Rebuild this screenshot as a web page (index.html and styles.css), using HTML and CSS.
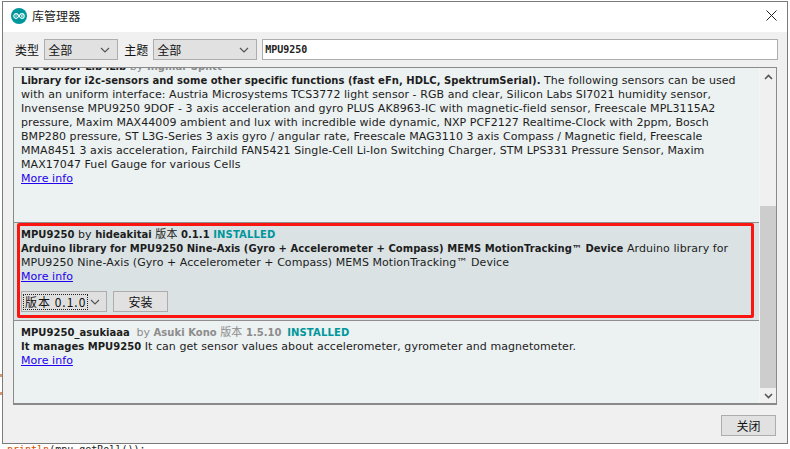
FILE: index.html
```html
<!DOCTYPE html>
<html lang="zh-CN">
<head>
  <meta charset="UTF-8" />
  <title>库管理器</title>
  <link rel="stylesheet" href="styles.css">
</head>
<body>
  <div class="stray stray-a"></div>
  <div class="stray stray-b"></div>
  <div class="window">
    <div class="titlebar">
      <svg class="logo" width="16" height="16" viewBox="0 0 16 16">
        <circle cx="8" cy="8" r="8" fill="#00979c"/>
        <path d="M5.2 5.6a2.4 2.4 0 1 0 0 4.8c1.3 0 2-1.2 2.8-2.4.8-1.2 1.5-2.4 2.8-2.4a2.4 2.4 0 1 1 0 4.8c-1.3 0-2-1.2-2.8-2.4-.8-1.2-1.5-2.4-2.8-2.4z" fill="none" stroke="#fff" stroke-width="1.1"/>
        <path d="M4.2 8h2M9.9 8h1.9M10.85 7.05v1.9" fill="none" stroke="#fff" stroke-width=".8"/>
      </svg>
      <span class="title">库管理器</span>
      <svg class="close-x" width="11" height="11" viewBox="0 0 11 11">
        <path d="M.5.5l10 10M10.5.5l-10 10" stroke="#222" stroke-width="1" fill="none"/>
      </svg>
    </div>

    <div class="content">
      <div class="filters">
        <label>类型</label>
        <div class="dropdown type-drop">全部
          <svg width="10" height="6" viewBox="0 0 10 6"><path d="M1 1l4 4 4-4" fill="none" stroke="#555" stroke-width="1.2"/></svg>
        </div>
        <label>主题</label>
        <div class="dropdown topic-drop">全部
          <svg width="10" height="6" viewBox="0 0 10 6"><path d="M1 1l4 4 4-4" fill="none" stroke="#555" stroke-width="1.2"/></svg>
        </div>
        <input class="search" type="text" value="MPU9250">
      </div>

      <div class="list">
        <div class="rows">
          <div class="row row-first">
            <div><b>I2C Sensor Lib iLib</b> <span class="muted">by <b>Ingmar Splitt</b></span></div>
            <div><b>Library for i2c-sensors and some other specific functions (fast eFn, HDLC, SpektrumSerial).</b> The following sensors can be used</div>
            <div>with an uniform interface: Austria Microsystems TCS3772 light sensor - RGB and clear, Silicon Labs SI7021 humidity sensor,</div>
            <div>Invensense MPU9250 9DOF - 3 axis acceleration and gyro PLUS AK8963-IC with magnetic-field sensor, Freescale MPL3115A2</div>
            <div>pressure, Maxim MAX44009 ambient and lux with incredible wide dynamic, NXP PCF2127 Realtime-Clock with 2ppm, Bosch</div>
            <div>BMP280 pressure, ST L3G-Series 3 axis gyro / angular rate, Freescale MAG3110 3 axis Compass / Magnetic field, Freescale</div>
            <div>MMA8451 3 axis acceleration, Fairchild FAN5421 Single-Cell Li-Ion Switching Charger, STM LPS331 Pressure Sensor, Maxim</div>
            <div>MAX17047 Fuel Gauge for various Cells</div>
            <a href="#">More info</a>
          </div>

          <div class="row row-selected">
            <div><b>MPU9250</b> by <b>hideakitai</b> 版本 <b>0.1.1</b> <b class="installed">INSTALLED</b></div>
            <div><b>Arduino library for MPU9250 Nine-Axis (Gyro + Accelerometer + Compass) MEMS MotionTracking™ Device</b> Arduino library for</div>
            <div>MPU9250 Nine-Axis (Gyro + Accelerometer + Compass) MEMS MotionTracking™ Device</div>
            <a href="#">More info</a>
            <div class="actions">
              <div class="dropdown version-drop"><span class="focus">版本 0.1.0</span>
                <svg width="10" height="6" viewBox="0 0 10 6"><path d="M1 1l4 4 4-4" fill="none" stroke="#555" stroke-width="1.2"/></svg>
              </div>
              <button class="btn install-btn">安装</button>
            </div>
            <div class="highlight"></div>
          </div>

          <div class="row row-last">
            <div><b>MPU9250_asukiaaa</b> <span class="muted">by <b>Asuki Kono</b> 版本 <b>1.5.10</b></span> <b class="installed">INSTALLED</b></div>
            <div><b>It manages MPU9250</b> It can get sensor values about accelerometer, gyrometer and magnetometer.</div>
            <a href="#">More info</a>
          </div>
        </div>

        <div class="scrollbar">
          <div class="arrow">
            <svg width="9" height="6" viewBox="0 0 9 6"><path d="M1 5l3.5-3.5L8 5" fill="none" stroke="#555" stroke-width="1.6"/></svg>
          </div>
          <div class="track"><div class="thumb"></div></div>
          <div class="arrow arrow-down">
            <svg width="9" height="6" viewBox="0 0 9 6"><path d="M1 1l3.5 3.5L8 1" fill="none" stroke="#555" stroke-width="1.6"/></svg>
          </div>
        </div>
      </div>

      <div class="footer">
        <button class="btn close-btn">关闭</button>
      </div>
    </div>
  </div>
  <div class="code-behind"><span class="kw">println</span>(mpu.getRoll());</div>
</body>
</html>
```
FILE: styles.css
```css
* {
  box-sizing: border-box;
  margin: 0;
  padding: 0;
}

html, body {
  height: 449px;
  overflow: hidden;
}

body {
  position: relative;
  background: #fff;
  padding: 1px 2px 0 2px;
  font-family: "DejaVu Sans", "Noto Sans CJK SC", sans-serif;
  font-size: 11px;
  letter-spacing: 0.06px;
  color: #1d1d1d;
}

b {
  font-size: 10px;
  letter-spacing: 0.03px;
}

.window {
  width: 786px;
  height: 443px;
  border: 1px solid #7a7a7a;
  display: flex;
  flex-direction: column;
  background: #f0f0f0;
}

.titlebar {
  height: 30px;
  flex: none;
  background: #fff;
  display: flex;
  align-items: center;
  padding: 0 10px 3px 8px;
}

.logo {
  margin-right: 5px;
}

.title {
  font-family: "Noto Sans CJK SC", sans-serif;
  font-size: 12px;
  flex: 1;
}

.content {
  flex: 1;
  display: flex;
  flex-direction: column;
  padding: 7px 9px 0 10px;
  min-height: 0;
}

/* Filter row */
.filters {
  display: flex;
  align-items: center;
  height: 21px;
  font-family: "Noto Sans CJK SC", sans-serif;
  font-size: 12px;
  color: #111;
}

.filters label {
  margin: 0 5px 0 2px;
}

.dropdown {
  display: flex;
  align-items: center;
  justify-content: space-between;
  height: 21px;
  background: #e1e1e1;
  border: 1px solid #adadad;
  padding: 0 7px 0 3px;
  font-family: "Noto Sans CJK SC", sans-serif;
  font-size: 12px;
  color: #111;
}

.type-drop {
  width: 74px;
  margin-right: 4px;
}

.topic-drop {
  width: 104px;
  margin-right: 5px;
}

.search {
  flex: 1;
  height: 21px;
  border: 1px solid #adadad;
  background: #fff;
  padding: 0 2px;
  font-family: "DejaVu Sans Mono", monospace;
  font-size: 10px;
  font-weight: bold;
  color: #222;
}

/* Library list */
.list {
  height: 338px;
  margin: 7px 1px 0 0;
  display: flex;
  background: #ecf1f1;
  border: 1px solid #8a8a8a;
  border-bottom-width: 2px;
  overflow: hidden;
}

.rows {
  flex: 1;
  min-width: 0;
  overflow: hidden;
}

.row {
  position: relative;
  padding: 2px 7px;
  line-height: 14px;
  white-space: nowrap;
  border-bottom: 1px solid #8f8f8f;
}

.row-first {
  margin-top: -10px;
  height: 165px;
}

.row-selected {
  height: 98px;
  padding-top: 5px;
  background: #dae2e4;
}

.row-last {
  border-bottom: 0;
  padding-top: 5px;
}

.row-last .muted {
  margin: 0 2px 0 3px;
}

.row a {
  color: #2200ee;
}

.muted {
  color: #8c8c8c;
}

.installed {
  color: #00979c;
  letter-spacing: 0.15px;
}

.actions {
  display: flex;
  gap: 6px;
  margin-top: 7px;
}

.version-drop {
  width: 86px;
  background: #dfdfdf;
  padding: 0 6px 0 2px;
}

.focus {
  outline: 1px dotted #222;
  letter-spacing: 1px;
  padding: 0 1px;
}

.btn {
  background: #e1e1e1;
  border: 1px solid #adadad;
  font-family: "Noto Sans CJK SC", sans-serif;
  font-size: 12px;
  color: #111;
}

.install-btn {
  width: 55px;
  height: 21px;
}

/* Red annotation drawn over the selected row */
.highlight {
  position: absolute;
  left: 3px;
  top: 0;
  width: 737px;
  height: 95px;
  border: 3px solid #fb1510;
  border-radius: 2px;
  pointer-events: none;
}

.scrollbar {
  width: 17px;
  flex: none;
  background: #f0f0f0;
  border-left: 1px solid #f5f5f5;
  display: flex;
  flex-direction: column;
}

.arrow {
  height: 17px;
  flex: none;
  display: flex;
  align-items: center;
  justify-content: center;
}

.arrow-down {
  height: 15px;
}

.track {
  flex: 1;
  display: flex;
  flex-direction: column;
  justify-content: flex-end;
}

.thumb {
  height: 182px;
  background: #cdcdcd;
}

.footer {
  flex: 1;
  display: flex;
  justify-content: flex-end;
  align-items: flex-start;
  padding: 10px 2px 0 0;
}

.close-btn {
  width: 55px;
  height: 21px;
}

/* Editor text peeking out under the dialog */
.code-behind {
  font-family: "DejaVu Sans Mono", monospace;
  font-size: 10px;
  line-height: 12px;
  letter-spacing: 0;
  padding-left: 5px;
  color: #222;
}

.kw {
  color: #d35400;
}

.stray {
  position: absolute;
  left: 0;
  width: 2px;
  height: 3px;
  background: #d9966a;
}

.stray-a {
  top: 374px;
}

.stray-b {
  top: 392px;
}
```
